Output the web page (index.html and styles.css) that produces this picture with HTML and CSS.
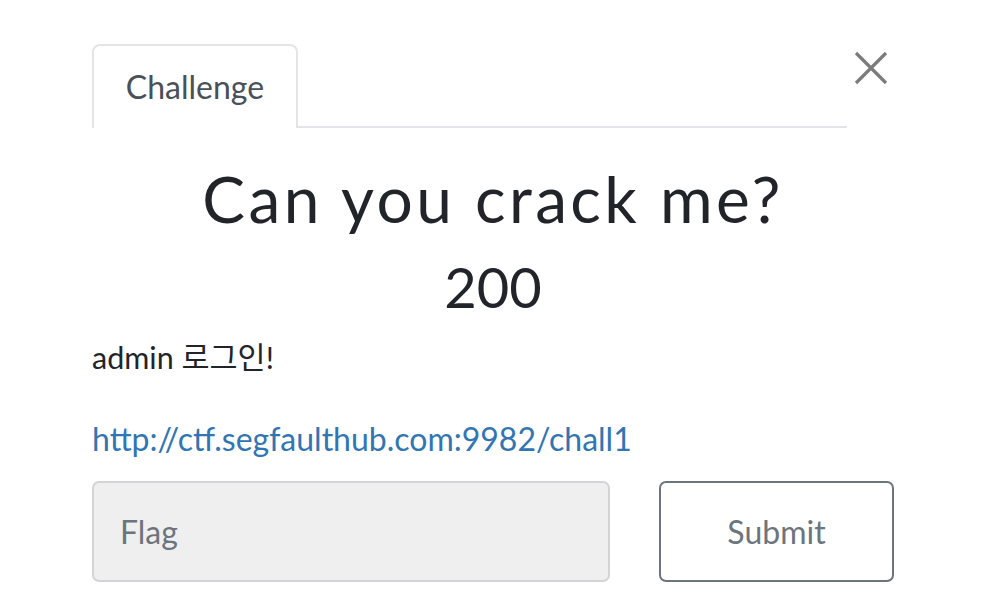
FILE: index.html
```html
<!DOCTYPE html>
<html>
<head>
<meta charset="utf-8">
<link rel="stylesheet" href="styles.css">
</head>
<body>
<div class="modal">
  <div class="header">
    <div class="tabs">
      <div class="tab">Challenge</div>
    </div>
    <button class="close" aria-label="Close">
      <svg width="34" height="34" viewBox="0 0 34 34"><path d="M2 2 L32 32 M32 2 L2 32" stroke="#7b7b7b" stroke-width="3.2" fill="none"/></svg>
    </button>
  </div>
  <h2 class="title">Can you crack me?</h2>
  <h3 class="value">200</h3>
  <p class="desc">admin 로그인!</p>
  <p class="link-row"><a class="link" href="#">http://ctf.segfaulthub.com:9982/chall1</a></p>
  <div class="form">
    <input class="flag" type="text" placeholder="Flag">
    <button class="submit">Submit</button>
  </div>
</div>
</body>
</html>
```

FILE: styles.css
```css
html, body {
  margin: 0;
  padding: 0;
  background: #fff;
}
body {
  font-family: Lato, "Noto Sans CJK KR", sans-serif;
  color: #212529;
}
.modal {
  width: 802px;
  margin-left: 92px;
  padding-top: 44px;
}
.header {
  display: flex;
  align-items: flex-start;
}
.tabs {
  width: 755px;
  border-bottom: 2px solid #e3e5e8;
  display: flex;
}
.tab {
  width: 206px;
  height: 84px;
  box-sizing: border-box;
  border: 2px solid #e3e5e8;
  border-bottom: none;
  border-radius: 8px 8px 0 0;
  margin-bottom: -2px;
  background: #fff;
  font-size: 32px;
  color: #495057;
  display: flex;
  align-items: center;
  justify-content: center;
  padding-bottom: 2px;
}
.close {
  margin-left: auto;
  margin-right: 6px;
  margin-top: 7px;
  background: none;
  border: none;
  padding: 0;
  width: 34px;
  height: 34px;
}
.title {
  margin: 33px 0 0;
  font-size: 64px;
  font-weight: 400;
  letter-spacing: 3.4px;
  text-align: center;
  line-height: 76px;
}
.value {
  margin: 18px 0 0;
  font-size: 56px;
  font-weight: 400;
  text-align: center;
  line-height: 64px;
}
.desc {
  margin: 18px 0 0;
  font-size: 30.5px;
  line-height: 40px;
}
.link-row {
  margin: 42px 0 0;
  font-size: 32px;
  line-height: 40px;
}
.link {
  color: #3275b3;
  text-decoration: none;
}
.form {
  display: flex;
  gap: 49px;
  margin-top: 22px;
}
.flag {
  width: 518px;
  height: 101px;
  box-sizing: border-box;
  background: #efefef;
  border: 2px solid #d3d4d8;
  border-radius: 7px;
  padding: 0 26px;
  font-family: Lato, sans-serif;
  font-size: 32px;
  color: #495057;
  outline: none;
}
.flag::placeholder {
  color: #6c757d;
}
.submit {
  width: 235px;
  height: 101px;
  box-sizing: border-box;
  background: #fff;
  border: 2px solid #6c757d;
  border-radius: 7px;
  font-family: Lato, sans-serif;
  font-size: 32px;
  color: #6c757d;
}
```
